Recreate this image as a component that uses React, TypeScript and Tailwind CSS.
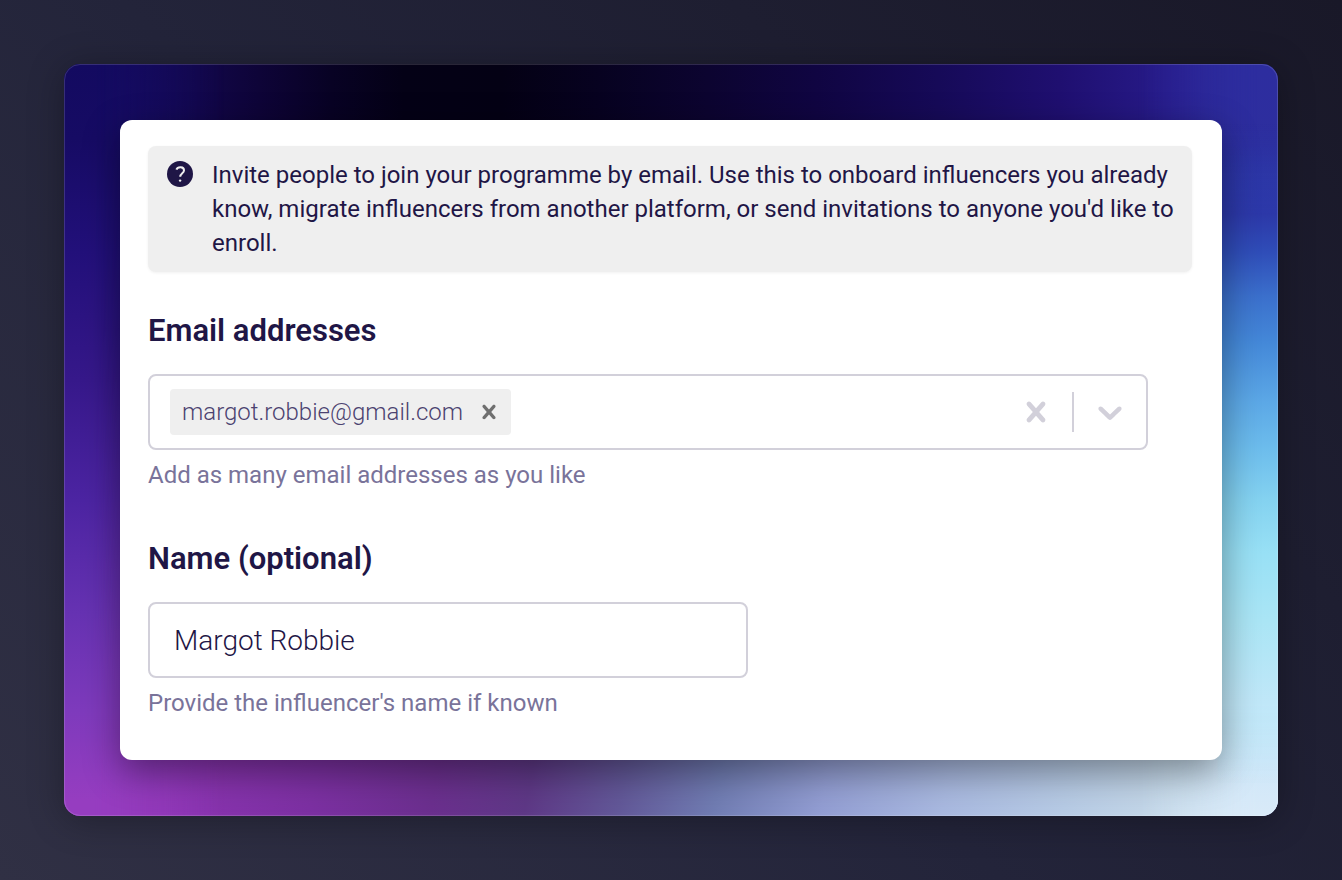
import { useState } from 'react';

function CrossIcon({ size }: { size: number }) {
  return (
    <svg width={size} height={size} viewBox="0 0 20 20" fill="currentColor" aria-hidden="true">
      <path d="M14.348 14.849c-0.469 0.469-1.229 0.469-1.697 0l-2.651-3.030-2.651 3.029c-0.469 0.469-1.229 0.469-1.697 0-0.469-0.469-0.469-1.229 0-1.697l2.758-3.15-2.759-3.152c-0.469-0.469-0.469-1.228 0-1.697s1.228-0.469 1.697 0l2.652 3.031 2.651-3.031c0.469-0.469 1.228-0.469 1.697 0s0.469 1.229 0 1.697l-2.758 3.152 2.758 3.15c0.469 0.469 0.469 1.229 0 1.698z" />
    </svg>
  );
}

function DownChevron() {
  return (
    <svg width={40} height={40} viewBox="0 0 20 20" fill="currentColor" aria-hidden="true">
      <path d="M4.516 7.548c0.436-0.446 1.043-0.481 1.576 0l3.908 3.747 3.908-3.747c0.533-0.481 1.141-0.446 1.574 0 0.436 0.445 0.408 1.197 0 1.615-0.406 0.418-4.695 4.502-4.695 4.502-0.217 0.223-0.502 0.335-0.787 0.335s-0.57-0.112-0.789-0.335c0 0-4.287-4.084-4.695-4.502s-0.436-1.17 0-1.615z" />
    </svg>
  );
}

// One gradient per side, blended into each other near the corners
function Backdrop() {
  return (
    <div className="absolute inset-0 -z-10 overflow-hidden rounded-2xl" aria-hidden="true">
      <div className="absolute inset-0 bg-[linear-gradient(to_right,#130a60_0%,#150b5c_5%,#12074a_11%,#0e0438_16%,#080224_22%,#040116_28%,#040114_36%,#070220_44%,#0c0430_53%,#100542_62%,#160a58_72%,#1f0f70_82%,#281c8c_92%,#2d2d9f_100%)]" />
      <div className="absolute inset-0 bg-[linear-gradient(100deg,#963dc0_4%,#8c34b2_17%,#7c30a2_28%,#6b2f8e_37%,#5e3886_44%,#625898_51%,#707cb2_58%,#929dd2_66%,#a8b8df_75%,#b6cae4_84%,#c5d8e8_92%,#d9eaf8_100%)] [mask-image:linear-gradient(to_bottom,transparent_35%,black_80%)]" />
      <div className="absolute inset-0 bg-[linear-gradient(to_bottom,#130a60_0%,#160b64_10%,#22107a_25%,#36188a_42%,#4c24a2_58%,#6632b2_73%,#7e3abc_86%,#963dc0_98%)] [mask-image:linear-gradient(to_right,black_30px,transparent_160px)]" />
      <div className="absolute inset-0 bg-[linear-gradient(to_bottom,#2d2d9f_0%,#2d2e9e_11%,#2c38a8_18%,#2f4db8_25%,#3b70cc_31%,#4488d8_37%,#5ca8e6_45%,#6cbcec_51%,#84d2f0_58%,#98e0f5_65%,#aae5f5_74%,#c0e7f8_85%,#cfe7f9_93%,#d9eaf8_100%)] [mask-image:linear-gradient(to_left,black_20px,transparent_140px)]" />
      {/* keeps the right edge solid below the corner */}
      <div className="absolute inset-0 bg-[linear-gradient(to_bottom,transparent_8%,#2c38a8_20%,#2f4db8_25%,#3b70cc_31%,#4488d8_37%,#5ca8e6_45%,#6cbcec_51%,#84d2f0_58%,#98e0f5_65%,#aae5f5_74%,#c0e7f8_85%,transparent_96%)] [mask-image:linear-gradient(to_left,black_60px,transparent_61px)]" />
    </div>
  );
}

export default function App() {
  const [emails, setEmails] = useState(['margot.robbie@gmail.com']);
  const [draft, setDraft] = useState('');
  const [name, setName] = useState('Margot Robbie');

  const addEmail = () => {
    if (!draft.trim()) return;
    setEmails([...emails, draft.trim()]);
    setDraft('');
  };

  return (
    <main className="min-h-screen bg-[linear-gradient(45deg,#303044_0%,#23243a_45%,#191828_100%)] p-16 font-[Roboto,sans-serif] text-[#1f1646]">
      <div className="relative isolate rounded-2xl p-14 shadow-[0_4px_36px_rgba(0,0,0,0.3)]">
        <Backdrop />
        <div className="pointer-events-none absolute inset-0 rounded-2xl border border-white/15" />

        <form
          className="relative rounded-xl bg-white px-7 pt-[26px] pb-10 shadow-[0_12px_36px_rgba(0,0,0,0.4)]"
          onSubmit={(e) => e.preventDefault()}
        >
          {/* Help notice */}
          <div className="mr-0.5 flex gap-[18px] rounded-lg bg-[#efefef] py-3 pr-4 pl-[18px] shadow-[0_1px_3px_rgba(0,0,0,0.06)]">
            <svg className="mt-0.5 h-7 w-7 shrink-0" viewBox="0 0 28 28" fill="none" aria-hidden="true">
              <circle cx="14" cy="14" r="13" fill="#1f1646" />
              <path d="M10.4 9.6C11.6 6.3 18.2 6.2 18 10.5C17.9 13.2 14.2 13.4 14.2 16.8" stroke="#efefef" strokeWidth="2" />
              <circle cx="14.1" cy="20.6" r="1.2" fill="#efefef" />
            </svg>
            <p className="text-2xl leading-[34px]">
              Invite people to join your programme by email. Use this to onboard influencers you already
              know, migrate influencers from another platform, or send invitations to anyone you'd like to
              enroll.
            </p>
          </div>

          {/* Email addresses */}
          <label htmlFor="emails" className="mt-10 block text-[31px] leading-[38px] font-semibold">
            Email addresses
          </label>
          <div className="mt-6 flex min-h-[76px] max-w-[1000px] items-center rounded-lg border-2 border-[#d2d0da] pl-5">
            <div className="flex flex-1 flex-wrap items-center gap-2">
              {emails.map((email) => (
                <span key={email} className="flex h-[46px] items-center rounded bg-[#efefef] pl-3">
                  <span className="text-2xl leading-[34px] font-light text-[#4b4270]">{email}</span>
                  <button
                    type="button"
                    aria-label={`Remove ${email}`}
                    className="pr-2 pl-3 text-[#6f6f6f]"
                    onClick={() => setEmails(emails.filter((item) => item !== email))}
                  >
                    <CrossIcon size={28} />
                  </button>
                </span>
              ))}
              <input
                id="emails"
                type="text"
                value={draft}
                className="min-w-0 flex-1 text-2xl font-light outline-none"
                onChange={(e) => setDraft(e.target.value)}
                onKeyDown={(e) => e.key === 'Enter' && addEmail()}
                aria-describedby="emails-hint"
              />
            </div>
            <button type="button" aria-label="Clear all" className="px-4 text-[#d2d0da]" onClick={() => setEmails([])}>
              <CrossIcon size={40} />
            </button>
            <span className="h-10 w-0.5 bg-[#d2d0da]" />
            <button type="button" aria-label="Show options" className="px-4 text-[#d2d0da]">
              <DownChevron />
            </button>
          </div>
          <p id="emails-hint" className="mt-2 text-2xl leading-[34px] text-[#79739a]">
            Add as many email addresses as you like
          </p>

          {/* Name */}
          <label htmlFor="name" className="mt-12 block text-[31px] leading-[38px] font-semibold">
            Name (optional)
          </label>
          <input
            id="name"
            type="text"
            value={name}
            onChange={(e) => setName(e.target.value)}
            className="mt-6 block h-[76px] w-full max-w-[600px] rounded-lg border-2 border-[#d2d0da] px-6 text-[28px] font-light outline-none"
            aria-describedby="name-hint"
          />
          <p id="name-hint" className="mt-2 text-2xl leading-[34px] text-[#79739a]">
            Provide the influencer's name if known
          </p>
        </form>
      </div>
    </main>
  );
}
